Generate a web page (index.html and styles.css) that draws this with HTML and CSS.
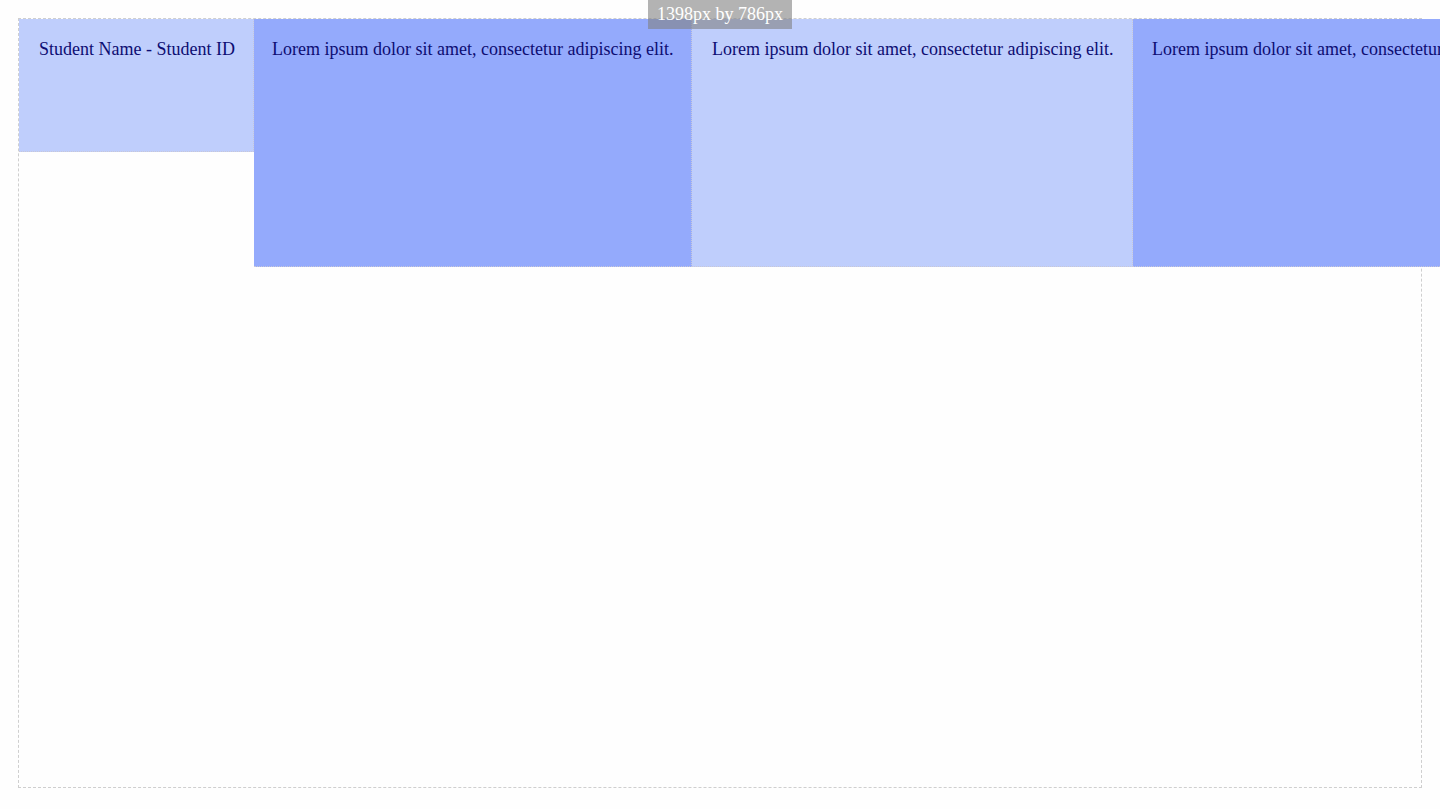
FILE: index.html
```html
<!DOCTYPE html>
<html lang="en">
<head>
<meta charset="utf-8">
<title>Student</title>
<link rel="stylesheet" href="styles.css">
</head>
<body>
<div class="size-label">1398px by 786px</div>
<div class="frame">
  <div class="row">
    <div class="cell cell-name">Student Name - Student ID</div>
    <div class="cell cell-dark cell-a">Lorem ipsum dolor sit amet, consectetur adipiscing elit.</div>
    <div class="cell cell-light cell-b">Lorem ipsum dolor sit amet, consectetur adipiscing elit.</div>
    <div class="cell cell-dark">Lorem ipsum dolor sit amet, consectetur adipiscing elit.</div>
  </div>
</div>
</body>
</html>
```

FILE: styles.css
```css
html, body {
  margin: 0;
  padding: 0;
  overflow: hidden;
  background: #fefefe;
}
body {
  font-family: "Liberation Serif", "Times New Roman", serif;
  font-size: 18px;
  color: #0d0d72;
  padding: 18px;
  height: 809px;
  box-sizing: border-box;
}
.frame {
  width: 1404px;
  height: 770px;
  box-sizing: border-box;
  border: 1px dashed #cfcfcf;
}
.row {
  display: flex;
  align-items: flex-start;
  width: max-content;
}
.cell {
  flex: none;
  box-sizing: border-box;
  padding: 20px 20px 0 19px;
  white-space: nowrap;
  border-right: 1px dotted #c8c8d8;
  border-bottom: 1px dotted #c8c8d8;
}
.cell-name {
  background: #bfcefc;
  height: 133px;
  width: 235px;
  padding-left: 20px;
}
.cell-a {
  width: 438px;
  padding-left: 18px;
}
.cell-b {
  width: 441px;
  padding-left: 20px;
}
.cell-dark {
  background: #94aafc;
  height: 248px;
}
.cell-light {
  background: #bfcefc;
  height: 248px;
}
.size-label {
  position: absolute;
  top: 0;
  left: 648px;
  width: 144px;
  height: 29px;
  background: rgba(128, 128, 128, 0.6);
  color: #ffffff;
  text-align: center;
  line-height: 29px;
  font-size: 18px;
  z-index: 2;
}
```
